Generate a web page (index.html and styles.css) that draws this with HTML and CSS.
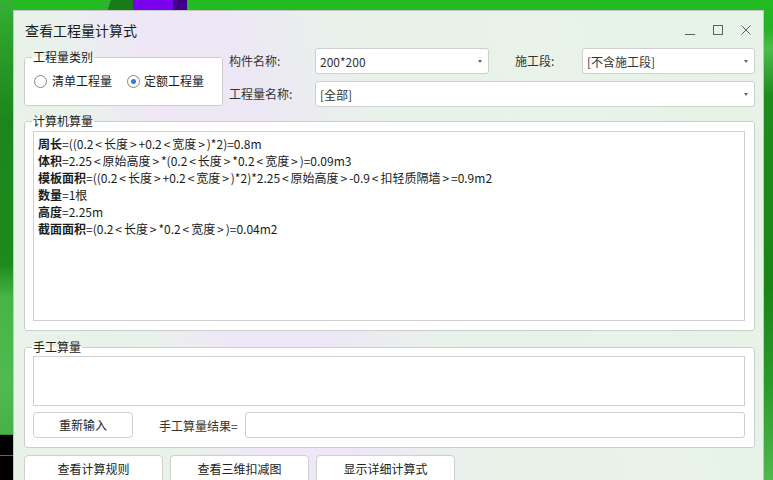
FILE: index.html
```html
<!DOCTYPE html>
<html lang="zh-CN">
<head>
<meta charset="utf-8">
<title>查看工程量计算式</title>
<link rel="stylesheet" href="styles.css">
</head>
<body>
<div class="desktop">
  <div class="win">
    <div class="titlebar">
      <span class="title">查看工程量计算式</span>
      <div class="controls">
        <span class="ctl"><svg width="12" height="12" viewBox="0 0 12 12"><path d="M1 10.5H11" stroke="#5f5f5f" stroke-width="1" fill="none"/></svg></span>
        <span class="ctl"><svg width="12" height="12" viewBox="0 0 12 12"><rect x="1.5" y="1.5" width="9" height="9" stroke="#5f5f5f" stroke-width="1" fill="none"/></svg></span>
        <span class="ctl"><svg width="12" height="12" viewBox="0 0 12 12"><path d="M1.5 1.5L10.5 10.5M10.5 1.5L1.5 10.5" stroke="#5f5f5f" stroke-width="1" fill="none"/></svg></span>
      </div>
    </div>
    <div class="content">
      <div class="top">
        <fieldset class="group g-type">
          <legend>工程量类别</legend>
          <div class="radios">
            <label class="radio"><span class="circle"></span>清单工程量</label>
            <label class="radio on"><span class="circle"></span>定额工程量</label>
          </div>
        </fieldset>
        <div class="fields">
          <span class="lbl">构件名称:</span>
          <div class="combo"><span>200*200</span><i class="arrow"></i></div>
          <span class="lbl lbl2">施工段:</span>
          <div class="combo"><span>[不含施工段]</span><i class="arrow"></i></div>
          <span class="lbl">工程量名称:</span>
          <div class="combo wide"><span>[全部]</span><i class="arrow"></i></div>
        </div>
      </div>

      <fieldset class="group g-calc">
        <legend>计算机算量</legend>
        <div class="formula">
          <div><b>周长</b>=((0.2<span class="ang">&lt;</span>长度<span class="ang">&gt;</span>+0.2<span class="ang">&lt;</span>宽度<span class="ang">&gt;</span>)*2)=0.8m</div>
          <div><b>体积</b>=2.25<span class="ang">&lt;</span>原始高度<span class="ang">&gt;</span>*(0.2<span class="ang">&lt;</span>长度<span class="ang">&gt;</span>*0.2<span class="ang">&lt;</span>宽度<span class="ang">&gt;</span>)=0.09m3</div>
          <div><b>模板面积</b>=((0.2<span class="ang">&lt;</span>长度<span class="ang">&gt;</span>+0.2<span class="ang">&lt;</span>宽度<span class="ang">&gt;</span>)*2)*2.25<span class="ang">&lt;</span>原始高度<span class="ang">&gt;</span>-0.9<span class="ang">&lt;</span>扣轻质隔墙<span class="ang">&gt;</span>=0.9m2</div>
          <div><b>数量</b>=1根</div>
          <div><b>高度</b>=2.25m</div>
          <div><b>截面面积</b>=(0.2<span class="ang">&lt;</span>长度<span class="ang">&gt;</span>*0.2<span class="ang">&lt;</span>宽度<span class="ang">&gt;</span>)=0.04m2</div>
        </div>
      </fieldset>

      <fieldset class="group g-manual">
        <legend>手工算量</legend>
        <div class="manual-input"></div>
        <div class="manual-row">
          <button class="btn btn-reset">重新输入</button>
          <span class="result-lbl">手工算量结果=</span>
          <div class="result-input"></div>
        </div>
      </fieldset>

      <div class="actions">
        <button class="btn btn-act">查看计算规则</button>
        <button class="btn btn-act">查看三维扣减图</button>
        <button class="btn btn-act">显示详细计算式</button>
      </div>
    </div>
  </div>
</div>
</body>
</html>
```

FILE: styles.css
```css
* { box-sizing: border-box; }

html, body {
  margin: 0;
  padding: 0;
}

body {
  font-family: "Noto Sans CJK SC", "Noto Sans", sans-serif;
  font-size: 12px;
  color: #222;
}

.desktop {
  position: relative;
  width: 773px;
  height: 480px;
  overflow: hidden;
  background:
    linear-gradient(#7a00ee, #7a00ee) 133px 0 / 40px 10px no-repeat,
    linear-gradient(#3e0088, #3e0088) 173px 0 / 14px 10px no-repeat,
    linear-gradient(110deg, #2cb52c 0 30%, #197a19 30% 100%) 100px 0 / 33px 10px no-repeat,
    linear-gradient(#ff2020, #ff2020) 0 455px / 13px 1px no-repeat,
    linear-gradient(180deg, #34b034 0, #2a9e2a 10%, #1c861c 25%, #1d8a1d 55%, #45b545 62%, #50ba50 80%, #48b048 90.5%, #000 90.6%, #000 100%) 0 0 / 13px 480px no-repeat,
    linear-gradient(180deg, #22bb22 0, #25b225 6%, #4cbc4c 10%, #1c8c1c 20%, #198519 60%, #2a9a2a 80%, #4fb84f 100%) 764px 0 / 9px 480px no-repeat,
    #22bb22;
}

.win {
  position: absolute;
  left: 13px;
  top: 10px;
  width: 751px;
  height: 480px;
  border: 1px solid #c4c8c4;
  background: linear-gradient(73deg, #e8f3e8 0%, #e9f2ea 20%, #efe7f7 29%, #ede7f5 40%, #e9f2ea 53%, #e7f3e7 100%);
  display: flex;
  flex-direction: column;
}

.titlebar {
  height: 37px;
  display: flex;
  align-items: center;
  justify-content: space-between;
  padding: 1px 3px 0 11px;
}

.title {
  font-size: 14px;
  line-height: 20px;
  color: #1b1b1b;
}

.controls {
  display: flex;
  align-items: center;
}

.ctl {
  width: 28px;
  height: 20px;
  display: flex;
  align-items: center;
  justify-content: center;
}

.ctl svg { display: block; }

.content {
  padding: 0 8px 0 10px;
  display: flex;
  flex-direction: column;
}

.top {
  display: flex;
  align-items: flex-start;
}

.group {
  margin: 0;
  border: 1px solid #cdcdcd;
  border-radius: 3px;
  background: #fff;
  min-inline-size: 0;
}

.group legend {
  padding: 0 1px;
  font-size: 12px;
  line-height: 14px;
  color: #222;
}

.g-type {
  width: 199px;
  margin-top: 2px;
  padding: 7px 6px 14px 9px;
}

.g-type legend { margin-left: -2px; }

.radios {
  display: flex;
  align-items: center;
  height: 20px;
}

.radio {
  display: flex;
  align-items: center;
  line-height: 20px;
  color: #1b1b1b;
}

.radio + .radio { margin-left: 15px; }

.circle {
  width: 13px;
  height: 13px;
  border: 1px solid #858585;
  border-radius: 50%;
  background: #fff;
  margin-right: 5px;
  display: flex;
  align-items: center;
  justify-content: center;
}

.radio.on .circle { margin-right: 4px; }

.radio.on .circle::after {
  content: "";
  width: 5px;
  height: 5px;
  border-radius: 50%;
  background: #2b7be0;
}

.fields {
  margin-left: 6px;
  display: grid;
  grid-template-columns: 86px 174px 93px 173px;
  grid-auto-rows: 26px;
  row-gap: 7px;
  align-items: center;
}

.lbl {
  color: #333;
  line-height: 16px;
}

.lbl2 { padding-left: 26px; }

.combo {
  height: 26px;
  border: 1px solid #cfcfcf;
  border-radius: 3px;
  background: #fff;
  display: flex;
  align-items: center;
  justify-content: space-between;
  padding: 0 6px 0 4px;
  color: #333;
}

.combo.wide { grid-column: 2 / 5; }

.arrow {
  width: 0;
  height: 0;
  border-left: 2.5px solid transparent;
  border-right: 2.5px solid transparent;
  border-top: 3px solid #666;
}

.g-calc {
  margin-top: 7px;
  padding: 3px 9px 9px 8px;
}

.g-calc legend,
.g-manual legend { margin-left: -1px; }

.formula {
  height: 190px;
  border: 1px solid #cfcfcf;
  background: #fff;
  padding: 3px 4px;
  line-height: 17px;
  color: #1b1b1b;
}

.formula b { font-weight: bold; }

.ang {
  display: inline-block;
  width: 10.5px;
  text-align: center;
}

.g-manual {
  margin-top: 9px;
  padding: 2px 9px 9px 8px;
}

.manual-input {
  height: 50px;
  border: 1px solid #cfcfcf;
  background: #fff;
}

.manual-row {
  margin-top: 6px;
  display: flex;
  align-items: center;
  height: 26px;
}

.btn {
  font-family: inherit;
  font-size: 12px;
  color: #222;
  background: #fff;
  border: 1px solid #cfcfcf;
  border-radius: 4px;
  height: 26px;
  padding: 0;
  line-height: 16px;
}

.btn-reset { width: 100px; }

.result-lbl {
  margin-left: 26px;
  margin-right: 7px;
  color: #333;
}

.result-input {
  flex: 1;
  height: 26px;
  border: 1px solid #cfcfcf;
  border-radius: 3px;
  background: #fff;
}

.actions {
  margin-top: 7px;
  display: flex;
  gap: 7px;
}

.btn-act {
  width: 139px;
  height: 28px;
}
```
